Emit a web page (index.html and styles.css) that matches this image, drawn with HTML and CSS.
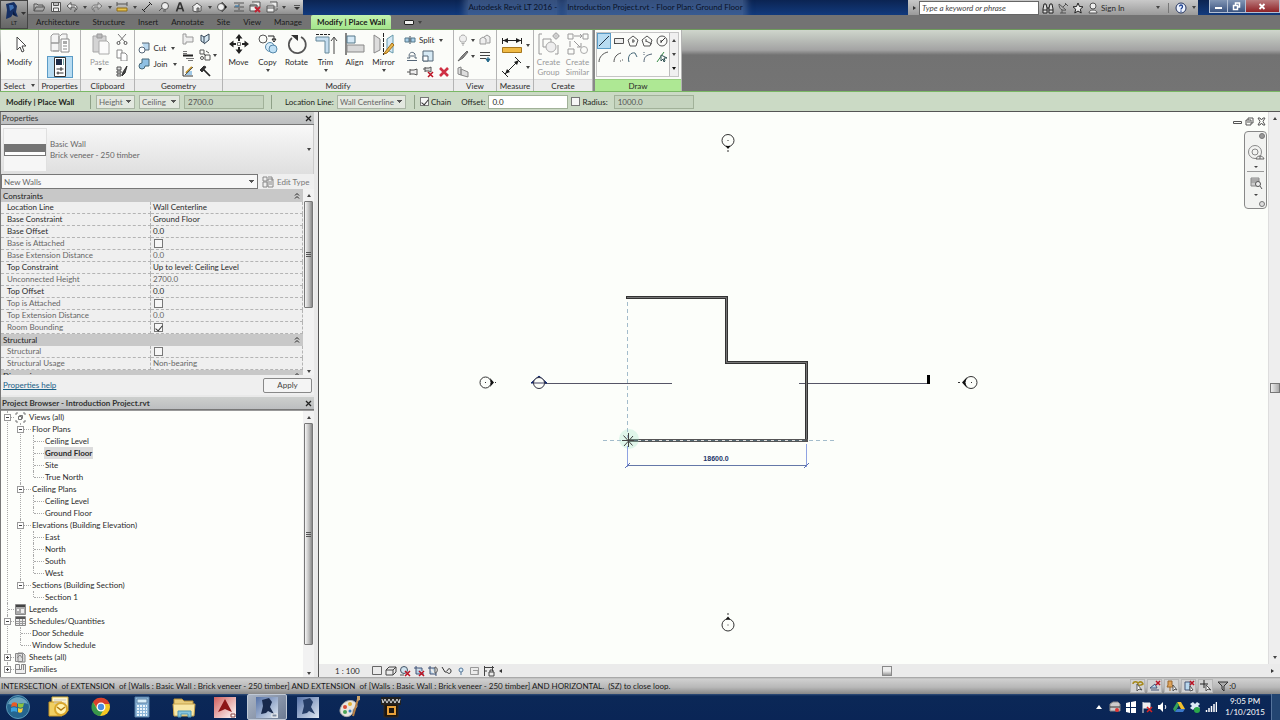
FILE: index.html
```html
<!DOCTYPE html>
<html lang="en">
<head>
<meta charset="utf-8">
<title>Autodesk Revit LT 2016 - Introduction Project.rvt</title>
<link rel="stylesheet" href="styles.css">
</head>
<body>
<div class="window">
<header class="top">
  <button class="app-btn" aria-label="Application menu">
    <svg width="27" height="29" viewBox="0 0 27 29"><path d="M5 4l8-2 3 4-1 6 2 5-5-3-2 3-5 2 1-9z" fill="#152f63" stroke="none"/><path d="M8 5l4 0 1 3-4 3z" fill="#3f6fb0" stroke="none"/><path d="M12 11l4 6-4-2z" fill="#0b1c40" stroke="none"/><path d="M20 12h5l-2.500 3z" fill="#333" stroke="none"/><text x="13" y="25" class="lt">LT</text></svg>
  </button>
  <div class="top-rows">
    <div class="titlebar">
      <div class="qat">
        <button aria-label="Open"><svg class="s" viewBox="0 0 12 12"><path d="M1 10V3h3l1 1h5v2M1 10l2-4h9l-2 4z"/></svg></button>
        <button aria-label="Save"><svg class="s" viewBox="0 0 12 12"><path d="M1.500 1.500h9v9h-9zM3.500 1.500v3h5v-3M3.500 10v-3h5v3" fill="#eee"/></svg></button>
        <button aria-label="Undo"><svg class="s" viewBox="0 0 12 12"><path d="M5 1.500L1 5l4 3.500V6h3c2 0 2 3 0 4.500 4-1 4-6.500 0-6.500H5z" fill="#eee"/></svg></button><i class="dd"></i>
        <button aria-label="Redo"><svg class="s" viewBox="0 0 12 12"><path d="M7 1.500L11 5 7 8.500V6H4c-2 0-2 3 0 4.500C0 9.500 0 4 4 4h3z" fill="#ccc" stroke="#777"/></svg></button><i class="dd"></i>
        <button class="push" aria-label="Measure"><svg class="s" viewBox="0 0 12 12"><path d="M1 3h10M1 1v4M11 1v4"/><path d="M1 7h10v3H1z" fill="#e5c14d" stroke="#8f6c19"/></svg></button><i class="dd"></i>
        <button aria-label="Aligned dimension"><svg class="s" viewBox="0 0 12 12"><path d="M2 10l8-8M1 8l3 3M8 1l3 3" stroke="#222"/></svg></button>
        <button aria-label="Tag"><svg class="s" viewBox="0 0 12 12"><circle cx="7" cy="5" r="3.500" fill="#eee"/><path d="M1 10l3-3M5 10h3"/></svg></button>
        <button aria-label="Text"><svg class="s" viewBox="0 0 12 12"><path d="M2.500 10.500L5.500 2h1l3 8.500M4 7.500h4" stroke="#333" stroke-width="1.700"/></svg></button>
        <button class="push" aria-label="3D view"><svg class="s" viewBox="0 0 12 12"><path d="M1 6l5-4 5 4M2 6v4l4 1 4-1V6M6 11V7h2v3" fill="#eee"/></svg></button><i class="dd"></i>
        <button aria-label="Section"><svg class="s" viewBox="0 0 12 12"><path d="M6 1l5 5-5 5z" fill="#111"/><circle cx="5" cy="6" r="3.500" fill="#eee"/></svg></button>
        <button aria-label="Thin lines"><svg class="s" viewBox="0 0 12 12"><path d="M1 2h4M7 2h4M1 6h4M7 6h4M1 10h4M7 10h4M6 1v10"/><path d="M2 5h4" stroke="#2878b4"/></svg></button>
        <button class="push" aria-label="Close hidden windows"><svg class="s" viewBox="0 0 12 12"><path d="M3 1h8v5M1 4h7v6H1zM1 5h7" fill="#eee"/><path d="M6 6l5 5M11 6l-5 5" stroke="#c02233" stroke-width="2"/></svg></button>
        <button aria-label="Switch windows"><svg class="s" viewBox="0 0 12 12"><path d="M4 1h7v5M1 5h7v6H1zM1 7h7M9 9h2V7" fill="#eee"/></svg></button><i class="dd"></i>
        <button aria-label="Customize"><svg class="s" viewBox="0 0 12 12"><path d="M3 4.500h6"/><path d="M3 6h6L6 9z" fill="#333" stroke="none"/></svg></button>
      </div>
      <h1 class="title"><span>Autodesk Revit LT 2016 -</span><span>Introduction Project.rvt - Floor Plan: Ground Floor</span></h1>
      <div class="info">
        <i class="rt"></i>
        <input class="search" type="text" placeholder="Type a keyword or phrase" aria-label="Search">
        <button aria-label="Find"><svg class="s" viewBox="0 0 12 12"><path d="M1 11V7l1-5h2l1 4v5zM7 11V6l1-4h2l1 5v4zM5 6h2M1 8h4M7 8h4" fill="#ddd" stroke="#222"/></svg></button>
        <button aria-label="Communication"><svg class="s" viewBox="0 0 12 12"><path d="M2 2c0 5 3 7 7 6L2 2M6 5l3-3M3 11h6M5 8v3M8 1l3 3"/></svg></button>
        <button aria-label="Favorites"><svg class="s" viewBox="0 0 12 12"><path d="M6 1l1.500 3.500 3.500.3-2.700 2.400.9 3.800L6 9l-3.200 2 .9-3.800L1 4.800l3.500-.3z" fill="#eee" stroke="#222"/></svg></button>
        <button class="sign"><svg class="s" viewBox="0 0 12 12"><circle cx="6" cy="4" r="3" fill="#eee"/><path d="M2 11c0-4 8-4 8 0z" fill="#eee"/></svg>Sign In</button>
        <i class="dd end"></i><span class="vs"></span>
        <button aria-label="Help"><svg class="s" viewBox="0 0 12 12"><circle cx="6" cy="6" r="5" fill="#eef4ff" stroke="#25355f"/><path d="M4.500 4.500c0-2 3-2 3 0S6 6 6 7.500M6 8.500v1.200" stroke="#1c3f91" stroke-width="1.300"/></svg></button><i class="dd"></i>
      </div>
      <div class="winbtns">
        <button aria-label="Minimize"><svg width="10" height="8" viewBox="0 0 10 8"><path d="M2 6h7" stroke="#fff" stroke-width="2"/></svg></button><button aria-label="Restore"><svg width="10" height="10" viewBox="0 0 10 10"><path d="M2.500 4.500h4v4h-4zM4.500 4V2h4v4h-2" stroke="#fff" stroke-width="1.500"/></svg></button><button class="x" aria-label="Close"><svg width="10" height="10" viewBox="0 0 10 10"><path d="M2.500 3l5 5M7.500 3l-5 5" stroke="#fff" stroke-width="1.800"/></svg></button>
      </div>
    </div>
    <nav class="tabs">
      <button>Architecture</button><button>Structure</button><button>Insert</button><button>Annotate</button><button>Site</button><button>View</button><button>Manage</button><button class="on">Modify | Place Wall</button>
      <span class="tabtoggle"><i class="box"></i><i class="dd"></i></span>
    </nav>
  </div>
</header>

<section class="ribbon">
  <div class="panel p-select"><div class="pb">
    <button class="big"><svg class="l" viewBox="0 0 24 24"><path d="M9 5v13l3-3 2 5 2-1-2-5h4z" fill="#fff" stroke="#444"/></svg>Modify</button>
  </div><div class="pt">Select <i class="dd"></i></div></div>

  <div class="panel p-props"><div class="pb col">
    <button class="mid" aria-label="Type properties"><svg width="24" height="20" viewBox="0 0 24 20"><path d="M3 3l2-2h6v9H3zM12 3l2-2h5v5M3 10h8v8H3zM11 3v7M5 18l6 0" fill="#f4f4f4" stroke="#999"/><path d="M13 6h8v13h-8z" fill="#fff" stroke="#888"/><path d="M15 8h4v3h-4z" fill="#aaa" stroke="none"/><path d="M15 13h4M15 16h4" stroke="#888"/></svg></button>
    <button class="mid sel" aria-label="Properties"><svg width="24" height="20" viewBox="0 0 24 20"><path d="M6.500.5h11v19h-11z" fill="#fff" stroke="#333"/><path d="M8 2h6v6H8z" fill="#1d2c48" stroke="none"/><path d="M15.500 2v6" stroke="#7aa"/><path d="M8.500 12h7M8.500 16h7M13 10v4M10 14.500v3" stroke="#333"/></svg></button>
  </div><div class="pt">Properties</div></div>

  <div class="panel p-clip"><div class="pb">
    <button class="big off"><svg class="l" viewBox="0 0 24 24"><path d="M5 4h13v16H5z" fill="#d4d4d4" stroke="#a5a5a5"/><path d="M9 2h5v4H9z" fill="#bbb" stroke="#999"/><path d="M11 9h8l2 2v11H11z" fill="#fbfbfb" stroke="#aaa"/></svg>Paste<i class="dd"></i></button>
    <div class="stack">
      <button aria-label="Cut to clipboard"><svg class="s" viewBox="0 0 12 12"><path d="M2 1l7 8M10 1L3 9" stroke="#777"/><circle cx="2.500" cy="10" r="1.500"/><circle cx="9.500" cy="10" r="1.500"/></svg></button>
      <button aria-label="Copy to clipboard"><svg class="s" viewBox="0 0 12 12"><path d="M1 1h5v8H1z" fill="#fff" stroke="#888"/><path d="M5 4h4l2 2v6H5z" fill="#fff" stroke="#888"/></svg></button>
      <button aria-label="Match type"><svg class="s" viewBox="0 0 12 12"><path d="M1 2h4v3H1zM1 6h4v2H1zM1 9h4v2H1z" fill="#ddd"/><path d="M11 1L7 7l-1 4 3-3 2-7" fill="#444" stroke="#333"/></svg></button>
    </div>
  </div><div class="pt">Clipboard</div></div>

  <div class="panel p-geom"><div class="pb">
    <div class="stack two">
      <button><svg class="s" viewBox="0 0 12 12"><path d="M4 1h7v7H7" fill="#b9d8ef" stroke="#567"/><circle cx="4" cy="8" r="3" fill="#fff" stroke="#567"/></svg>Cut<i class="dd"></i></button>
      <button><svg class="s" viewBox="0 0 12 12"><path d="M4 1h7v7H7a3 3 0 1 1-3-3z" fill="#8fc0e4" stroke="#467"/></svg>Join<i class="dd"></i></button>
    </div>
    <div class="mini-grid">
      <button aria-label="Cope"><svg class="s" viewBox="0 0 12 12"><path d="M1 1h3v3h7v5H4v2H1z" fill="#eee" stroke="#999"/></svg></button>
      <button aria-label="Split face"><svg class="s" viewBox="0 0 12 12"><path d="M2 2l3 2v6L2 8zM5 4l5-3v6l-5 4" fill="#d4e6f2" stroke="#345"/></svg></button>
      <button aria-label="Wall joins"><svg class="s" viewBox="0 0 12 12"><path d="M1 2.500h4M4 9.500h8M1 4.500h4M6 11.500h5" stroke="#777"/><path d="M1 6.500h10" stroke="#222" stroke-width="2"/></svg></button>
      <button class="wide" aria-label="Beam joins"><svg class="s" viewBox="0 0 12 12"><path d="M1 1h4v4H1zM6 6h5v5H6z" stroke="#555"/><circle cx="3" cy="9" r="1.500"/><path d="M7 2l3 2M5 5l2 2"/></svg><i class="dd"></i></button>
      <button aria-label="Paint"><svg class="s" viewBox="0 0 12 12"><path d="M1 1v10h10" stroke="#333"/><path d="M4 6h6v4H4z" fill="#9fc8e6" stroke="none"/><path d="M4 8l6-6" stroke="#c5952c" stroke-width="2"/><path d="M3 10l8-8" stroke="#555"/></svg></button>
      <button aria-label="Demolish"><svg class="s" viewBox="0 0 12 12"><path d="M4 4l7 7" stroke="#222" stroke-width="1.700"/><path d="M1 5l4-4 2 1-4 5z" fill="#333" stroke="#333"/></svg></button>
    </div>
  </div><div class="pt">Geometry</div></div>

  <div class="panel p-mod"><div class="pb">
    <button class="big"><svg class="l" viewBox="0 0 24 24"><path d="M12 2l3.500 4.500h-7zM12 22l3.500-4.500h-7zM2 12l4.500-3.500v7zM22 12l-4.500-3.500v7z" fill="#222" stroke="none"/><path d="M12 5v4M12 15v4M5 12h4M15 12h4" stroke="#222" stroke-width="2"/><path d="M10.500 10.500h3v3h-3z" stroke="#777"/></svg>Move</button>
    <button class="big"><svg class="l" viewBox="0 0 24 24"><circle cx="7" cy="7" r="4" stroke="#555"/><circle cx="14" cy="15" r="4.500" fill="#d6ecfa" stroke="#58a"/><circle cx="17" cy="17" r="4" fill="#bfe0f5" stroke="#58a"/><path d="M12 4h6v4M16 7l2 3 2-3z" stroke="#222"/></svg>Copy<i class="dd"></i></button>
    <button class="big"><svg class="l" viewBox="0 0 24 24"><path d="M7 6a8.500 8.500 0 1 0 9-1" stroke="#555" stroke-width="1.700"/><path d="M6 3h7v6z" fill="#333" stroke="none"/></svg>Rotate</button>
    <button class="big"><svg class="l" viewBox="0 0 24 24"><path d="M2 5h13v16h-4V9H2z" stroke="#689" fill="#c5def0"/><path d="M2 2.500h14" stroke="#222" stroke-dasharray="3 1"/><path d="M20 6v16M17 9l3-4 3 4" stroke="#444"/></svg>Trim<i class="dd"></i></button>
    <button class="big"><svg class="l" viewBox="0 0 24 24"><path d="M3 1v22" stroke="#111"/><path d="M4 4h8v7H4z" fill="#d5e9f6" stroke="#578"/><path d="M4 13h17v7H4z" fill="#d8d8d8" stroke="#888"/></svg>Align</button>
    <button class="big"><svg class="l" viewBox="0 0 24 24"><path d="M2 3l6 4v11l-6 3z" fill="#ddd" stroke="#888"/><path d="M21 3l-6 4v11l6 3z" fill="#d5e9f6" stroke="#69a"/><path d="M11.500 1v22" stroke="#222" stroke-dasharray="4 1"/><path d="M13 20l7-9 2 2-7 8-3 1z" fill="#e8b84d" stroke="#a56d16"/></svg>Mirror<i class="dd"></i></button>
    <div class="edit-grid">
      <button class="split"><svg class="s" viewBox="0 0 12 12"><path d="M1 4h4v4H1zM7 4h4v4H7z" fill="#a9cfe8" stroke="#578"/><path d="M6 2v8" stroke="#345"/></svg>Split<i class="dd"></i></button>
      <button aria-label="Offset"><svg class="s" viewBox="0 0 12 12"><path d="M1 10.500h10M1 8h3c-3-4 2-8 5-4v4h2M4 6h4" stroke="#567"/></svg></button>
      <button aria-label="Scale"><svg class="s" viewBox="0 0 12 12"><path d="M1 1h10v10H1z" fill="#d7eaf5" stroke="#567"/><path d="M1 6h5v5H1z" fill="#fff" stroke="#567"/></svg></button><span></span>
      <button aria-label="Pin"><svg class="s" viewBox="0 0 12 12"><path d="M1 6h3M4 3v6M4 4h4l3-1v6L8 8H4" fill="#eee"/></svg></button>
      <button aria-label="Unpin"><svg class="s" viewBox="0 0 12 12"><path d="M1 3h2M3 1v5M3 2h4l2-1v5L7 5H3" fill="#ddd"/><path d="M6 6l5 5M11 6l-5 5" stroke="#b12" stroke-width="1.500"/></svg></button>
      <button aria-label="Delete"><svg class="s" viewBox="0 0 12 12"><path d="M2 2l8 8M10 2l-8 8" stroke="#cf3044" stroke-width="2.600"/></svg></button>
    </div>
  </div><div class="pt">Modify</div></div>

  <div class="panel p-view"><div class="pb">
    <div class="pair-grid">
      <button aria-label="Hide"><svg class="s" viewBox="0 0 12 12"><path d="M4 8C1 5 3 1 6 1s5 4 2 7zM4.500 9.500h3M5 11h2" fill="#eee" stroke="#aaa"/></svg><i class="dd"></i></button>
      <button aria-label="Displace"><svg class="s" viewBox="0 0 12 12"><path d="M1 5l3-2 3 2v5H1zM5 3l3-2 3 2v6H8" fill="#eee" stroke="#999"/></svg></button>
      <button aria-label="Override"><svg class="s" viewBox="0 0 12 12"><path d="M10 1L5 6l-4 5 5-3 5-6z" fill="#888" stroke="#666"/></svg><i class="dd"></i></button>
      <button aria-label="Linework"><svg class="s" viewBox="0 0 12 12"><path d="M1 2.500h10M1 5.500h10M1 8.500h6" stroke="#444"/><path d="M9 7v3M7 9l2 3 2-3z" fill="#268" stroke="#268"/></svg></button>
      <button aria-label="Selection box"><svg class="s" viewBox="0 0 12 12"><path d="M1 2l3-1v8l-3-1zM4 3l7 3v5L4 9z" fill="#ddd" stroke="#888"/></svg></button>
    </div>
  </div><div class="pt">View</div></div>

  <div class="panel p-meas"><div class="pb col">
    <button class="mid m" aria-label="Measure"><svg width="22" height="20" viewBox="0 0 22 20"><path d="M2 5.500h18M1.500 3v6M20.500 3v6" stroke="#222"/><path d="M2 5.500l5-2.500v5zM20 5.500l-5-2.500v5z" fill="#222" stroke="none"/><path d="M1.500 12.500h19v5h-19z" fill="#efb944" stroke="#a7771d"/></svg><i class="dd"></i></button>
    <button class="mid m" aria-label="Dimension"><svg width="22" height="22" viewBox="0 0 22 22"><path d="M4 18L18 4M1 15l6 6M14 1l6 6" stroke="#222"/><path d="M4 18l2-5 3 3zM18 4l-2 5-3-3z" fill="#222" stroke="none"/></svg><i class="dd"></i></button>
  </div><div class="pt">Measure</div></div>

  <div class="panel p-create"><div class="pb">
    <button class="big off"><svg class="l" viewBox="0 0 24 24"><path d="M5 2H2v20h3M18 22h3v-9M6 7h8v8H6z" stroke="#999" fill="none"/><circle cx="14" cy="15" r="5" fill="#eee" stroke="#aaa"/><circle cx="19" cy="4" r="2.500" stroke="#999"/><path d="M19 0v8M15 4h8" stroke="#bbb"/></svg><span>Create<br>Group</span></button>
    <button class="big off"><svg class="l" viewBox="0 0 24 24"><path d="M2 2h5v5H2zM17 2h5v5h-5zM2 17h6v5H2z" stroke="#999"/><path d="M8 4h8M14 2l2 2-2 2M8 9l6 6M11 15h4v-4M4 9v6" stroke="#999"/><circle cx="18" cy="18" r="3.500" stroke="#aaa"/></svg><span>Create<br>Similar</span></button>
  </div><div class="pt">Create</div></div>

  <div class="panel p-draw"><div class="pb">
    <div class="gallery">
      <div class="shapes">
        <button class="sel" aria-label="Line"><svg class="s" viewBox="0 0 12 12"><path d="M1 11L11 1" stroke="#234"/></svg></button>
        <button aria-label="Rectangle"><svg class="s" viewBox="0 0 12 12"><path d="M1.500 3.500h9v5h-9z" stroke="#555" fill="#eee"/><path d="M1 8h2v1H1zM9 3h2v1H9z" fill="#444" stroke="none"/></svg></button>
        <button aria-label="Inscribed polygon"><svg class="s" viewBox="0 0 12 12"><path d="M6 1l5 4-2 6H3L1 5zM6 4v4M5 6h3" stroke="#555"/></svg></button>
        <button aria-label="Circumscribed polygon"><svg class="s" viewBox="0 0 12 12"><path d="M6 1l5 4-2 6H3L1 5zM5 6l6 3M5 4v3" stroke="#555"/></svg></button>
        <button aria-label="Circle"><svg class="s" viewBox="0 0 12 12"><circle cx="6" cy="6" r="5" stroke="#555"/><path d="M5 7l4-4M5 5v3" stroke="#333"/></svg></button>
        <button aria-label="Start end arc"><svg class="s" viewBox="0 0 12 12"><path d="M1 11C1 6 5 2 10 1" stroke="#555"/></svg></button>
        <button aria-label="Center ends arc"><svg class="s" viewBox="0 0 12 12"><path d="M1 11C1 6 4 3 8 2M9 9h1M7 10h1" stroke="#555"/></svg></button>
        <button aria-label="Tangent arc"><svg class="s" viewBox="0 0 12 12"><path d="M2 11C0 5 4 1 8 2l2 4" stroke="#467"/></svg></button>
        <button aria-label="Fillet arc"><svg class="s" viewBox="0 0 12 12"><path d="M3 11c0-5 2-7 8-8M3 3v1M3 1v1" stroke="#567"/></svg></button>
        <button aria-label="Pick lines"><svg class="s" viewBox="0 0 12 12"><path d="M1 11L8 1" stroke="#384"/><path d="M5 4v6l2-2 1 3 1-1-1-3h3z" fill="#fff" stroke="#355"/></svg></button>
      </div>
      <div class="gscroll"><i class="up"></i><i class="dd"></i><i class="dd more"></i></div>
    </div>
  </div><div class="pt">Draw</div></div>
</section>

<form class="options">
  <strong>Modify | Place Wall</strong><span class="sep"></span>
  <select class="o-h" aria-label="Height"><option>Height</option></select>
  <select class="o-c" aria-label="Level"><option>Ceiling</option></select>
  <input class="o-v" type="text" value="2700.0" aria-label="Height value"><span class="sep"></span>
  <label class="o-l" for="locline">Location Line:</label><select class="o-loc" id="locline"><option>Wall Centerline</option></select><span class="sep"></span>
  <label class="ck"><input type="checkbox" checked>Chain</label>
  <label class="o-off" for="offset">Offset:</label><input class="o-w" id="offset" type="text" value="0.0">
  <label class="ck" for="radck"><input id="radck" type="checkbox">Radius:</label><input class="o-r" type="text" value="1000.0" aria-label="Radius value">
</form>

<main class="work">
  <aside class="side">
    <section class="props">
      <h2 class="ph">Properties<button aria-label="Close properties"><svg width="7" height="7" viewBox="0 0 7 7"><path d="M1 1l5 5M6 1L1 6" stroke="#222" stroke-width="1.300"/></svg></button></h2>
      <button class="type"><span class="thumb"><i></i></span><span>Basic Wall<br>Brick veneer - 250 timber</span><i class="dd"></i></button>
      <div class="filter"><select aria-label="Filter"><option>New Walls</option></select><button><svg width="12" height="12" viewBox="0 0 12 12"><path d="M1 1h4v4H1zM6 1h4v4M1 6h4v5H1zM6 3h5v8H6zM7 6h3M7 8h3" stroke="#888"/></svg>Edit Type</button></div>
      <div class="pg">
        <div class="pgrid"><table>
          <colgroup><col class="c1"><col></colgroup>
          <tr class="g"><th colspan="2">Constraints<svg class="chev" viewBox="0 0 6 8"><path d="M1 3.500l2-2 2 2M1 6.500l2-2 2 2"/></svg></th></tr>
          <tr><td>Location Line</td><td>Wall Centerline</td></tr>
          <tr><td>Base Constraint</td><td>Ground Floor</td></tr>
          <tr><td>Base Offset</td><td>0.0</td></tr>
          <tr class="ro"><td>Base is Attached</td><td><input type="checkbox" aria-label="Base is Attached"></td></tr>
          <tr class="ro"><td>Base Extension Distance</td><td>0.0</td></tr>
          <tr><td>Top Constraint</td><td>Up to level: Ceiling Level</td></tr>
          <tr class="ro"><td>Unconnected Height</td><td>2700.0</td></tr>
          <tr><td>Top Offset</td><td>0.0</td></tr>
          <tr class="ro"><td>Top is Attached</td><td><input type="checkbox" aria-label="Top is Attached"></td></tr>
          <tr class="ro"><td>Top Extension Distance</td><td>0.0</td></tr>
          <tr class="ro"><td>Room Bounding</td><td><input type="checkbox" checked aria-label="Room Bounding"></td></tr>
          <tr class="g"><th colspan="2">Structural<svg class="chev" viewBox="0 0 6 8"><path d="M1 3.500l2-2 2 2M1 6.500l2-2 2 2"/></svg></th></tr>
          <tr class="ro"><td>Structural</td><td><input type="checkbox" aria-label="Structural"></td></tr>
          <tr class="ro"><td>Structural Usage</td><td>Non-bearing</td></tr>
          <tr class="g"><th colspan="2">Dimensions<svg class="chev" viewBox="0 0 6 8"><path d="M1 3.500l2-2 2 2M1 6.500l2-2 2 2"/></svg></th></tr>
        </table></div>
        <div class="vs-bar"><i class="up"></i><span class="thumbv t1"></span><i class="dd"></i></div>
      </div>
      <div class="pfoot"><a href="#help">Properties help</a><button>Apply</button></div>
    </section>
    <section class="browser">
      <h2 class="ph">Project Browser - Introduction Project.rvt<button aria-label="Close browser"><svg width="7" height="7" viewBox="0 0 7 7"><path d="M1 1l5 5M6 1L1 6" stroke="#222" stroke-width="1.300"/></svg></button></h2>
      <div class="tree-wrap">
        <ul class="tree">
          <li><div class="n"><i class="ex"></i><svg class="ti" viewBox="0 0 11 11"><path d="M1 3V1h2M8 1h2v2M10 8v2H8M3 10H1V8M3.500 4.500h3v3h-3zM3.500 4.500l1-1h3v3l-1 1" stroke="#777"/></svg>Views (all)</div>
            <ul>
              <li><div class="n"><i class="ex"></i>Floor Plans</div><ul><li><div class="n">Ceiling Level</div></li><li><div class="n cur"><b>Ground Floor</b></div></li><li><div class="n">Site</div></li><li><div class="n">True North</div></li></ul></li>
              <li><div class="n"><i class="ex"></i>Ceiling Plans</div><ul><li><div class="n">Ceiling Level</div></li><li><div class="n">Ground Floor</div></li></ul></li>
              <li><div class="n"><i class="ex"></i>Elevations (Building Elevation)</div><ul><li><div class="n">East</div></li><li><div class="n">North</div></li><li><div class="n">South</div></li><li><div class="n">West</div></li></ul></li>
              <li><div class="n"><i class="ex"></i>Sections (Building Section)</div><ul><li><div class="n">Section 1</div></li></ul></li>
            </ul></li>
          <li><div class="n"><svg class="ti" viewBox="0 0 11 11"><path d="M.5.500h10v10H.5z" fill="#aaa" stroke="#888"/><path d="M1 1h9v2H1z" fill="#444" stroke="none"/><path d="M2 5h2v2H2zM6 5h3v4H6z" fill="#eee" stroke="none"/></svg>Legends</div></li>
          <li><div class="n"><i class="ex"></i><svg class="ti" viewBox="0 0 11 11"><path d="M.5.500h10v9H.5z" fill="#eee" stroke="#888"/><path d="M1 1h9v2H1z" fill="#555" stroke="none"/><path d="M1 5.500h9M1 7.500h9M4.500 3v6M7.500 3v6" stroke="#999"/></svg>Schedules/Quantities</div>
            <ul><li><div class="n">Door Schedule</div></li><li><div class="n">Window Schedule</div></li></ul></li>
          <li><div class="n"><i class="ex plus"></i><svg class="ti" viewBox="0 0 11 11"><path d="M.5 1.500h7v8h-7zM3 1h5l2 2v7H3zM2 6l3-3 3 4" fill="#ddd" stroke="#888"/></svg>Sheets (all)</div></li>
          <li><div class="n"><i class="ex plus"></i><svg class="ti" viewBox="0 0 11 11"><path d="M.5.500h4v5h-4zM6.500.500h4v9h-10v-4h6zM8.500 1v5" fill="#eee" stroke="#888"/></svg>Families</div></li>
        </ul>
        <div class="vs-bar"><i class="up"></i><span class="thumbv t2"></span><i class="dd"></i></div>
      </div>
    </section>
  </aside>

  <section class="view">
    <div class="canvas-row">
      <div class="canvas">
        <svg class="plan" viewBox="319 112 949 552" preserveAspectRatio="xMidYMid meet">
          <g stroke="#333" fill="none" stroke-width="1">
            <circle cx="728" cy="140.500" r="6"/><path d="M725.500 146h5l-2.500 3z" fill="#111" stroke="none"/><path d="M727.500 140.500h1M728 150v2"/>
            <circle cx="728" cy="625" r="6"/><path d="M725.500 619.500h5l-2.500-3z" fill="#111" stroke="none"/><path d="M727.500 625h1M728 615v-2"/>
            <circle cx="485.500" cy="382.500" r="5.500"/><path d="M490 378l4 4.500-4 4.500 1-4.500z" fill="#111" stroke="none"/><path d="M485 382.500h1M495 382.500h1"/>
            <circle cx="971" cy="382.500" r="6"/><path d="M967 377l-5 5.500 5 5.500-2-5.500z" fill="#111" stroke="none"/><path d="M971 382.500h1M958 382.500h2"/>
            <path d="M545 383.500h127M799 383.500h129" stroke="#556"/><path d="M928.500 375v9" stroke="#000" stroke-width="3"/>
            <path d="M531 383l8-7 8 7z" fill="#13296e" stroke="#13296e"/><circle cx="539" cy="383" r="5.500" fill="#fbfdf8" stroke="#334"/><path d="M534 383h10" stroke="#446"/>
          </g>
          <path d="M626 297.500H726.500V362.500H806.500V442" fill="none" stroke="#333" stroke-width="3"/>
          <path d="M627 297.500H726.500V362.500H806.500V441" fill="none" stroke="#777" stroke-width="1"/>
          <path d="M628 440.500H808" stroke="#555" stroke-width="3"/><path d="M634 440.500H805" stroke="#ddd"/>
          <circle cx="629" cy="439" r="10" fill="#9fe3c6" stroke="none" opacity=".3"/>
          <path d="M627.500 302v136M603 440.500h20M809 440.500h25" stroke="#a3bccb" stroke-dasharray="4 3" fill="none"/>
          <path d="M634 440.500H805" stroke="#576b74" stroke-dasharray="4 3"/>
          <path d="M622 440.500h12M628.500 433v14M623.500 435.500l9 10M633 436l-9 10" stroke="#444"/>
          <path d="M627.500 446v21M806.500 444v23" stroke="#8fa3e2"/><path d="M627 465.500h180" stroke="#6478a8"/><path d="M625 468l5-5M804 468l5-5" stroke="#5a6fb6"/>
          <text x="716" y="461" class="dim">18600.0</text>
        </svg>
        <div class="mdi"><button aria-label="Minimize view"><svg width="9" height="9" viewBox="0 0 9 9"><path d="M.5 4.500h8v2h-8z"/></svg></button><button aria-label="Restore view"><svg width="9" height="9" viewBox="0 0 9 9"><path d="M1 3h5v5H1zM3 3V1h5v5H6M2 5h3"/></svg></button><button aria-label="Close view"><svg width="9" height="9" viewBox="0 0 9 9"><path d="M1 1h2l1.500 2L6 1h2L6 4.500 8 8H6L4.500 6 3 8H1l2-3.500z"/></svg></button></div>
        <div class="navbar">
          <svg width="8" height="8" viewBox="0 0 8 8"><circle cx="4" cy="4" r="2.500" fill="#999" stroke="#777"/></svg>
          <button aria-label="Steering wheel"><svg width="18" height="18" viewBox="0 0 18 18"><circle cx="8" cy="8" r="6.500" stroke="#888"/><circle cx="8" cy="8" r="3" stroke="#888"/><path d="M9 15c1-4 7-4 8 0zM13 12v3" fill="#eee" stroke="#666"/></svg></button><i class="dd"></i>
          <span class="hr"></span>
          <button aria-label="Zoom"><svg width="14" height="14" viewBox="0 0 14 14"><path d="M2 2h8v8H2zM2 4h8M2 6h8" fill="#ccc" stroke="#888"/><circle cx="9" cy="8" r="2.500" fill="#eee" stroke="#555"/><path d="M11 10l2 3"/></svg></button><i class="dd"></i>
          <svg width="8" height="8" viewBox="0 0 8 8"><circle cx="4" cy="4" r="2.500" fill="#ddd" stroke="#777"/></svg>
        </div>
      </div>
      <div class="cv-scroll"><i class="up"></i><span></span><i class="dd"></i></div>
    </div>
    <div class="viewbar">
      <span class="scale">1 : 100</span>
      <div class="vicons">
      <button aria-label="Detail level"><svg class="s" viewBox="0 0 12 12"><path d="M1.500 1.500h9v8h-9z" stroke="#666"/></svg></button>
      <button aria-label="Visual style"><svg class="s" viewBox="0 0 12 12"><path d="M1 5h7v5H1zM1 5l3-3h7L8 5M11 2v5l-3 3" stroke="#444"/></svg></button>
      <button aria-label="Shadows"><svg class="s" viewBox="0 0 12 12"><circle cx="5" cy="5" r="3.500" fill="#cfe2ee" stroke="#456"/><path d="M1 10h4"/><path d="M6 6l5 5M11 6l-5 5" stroke="#b12" stroke-width="1.500"/></svg></button>
      <button aria-label="Crop view"><svg class="s" viewBox="0 0 12 12"><path d="M3 1v8h8M1 3h8v3" fill="#b7d3e8" stroke="#457"/><path d="M6 6l5 5M11 6l-5 5" stroke="#b12" stroke-width="1.500"/></svg></button>
      <button aria-label="Show crop"><svg class="s" viewBox="0 0 12 12"><path d="M3 1v8h6M1 3h8v8" fill="#b7d3e8" stroke="#457"/><path d="M8 2c3 0 3 6 0 6z" fill="#eee"/></svg></button>
      <button aria-label="Hide isolate"><svg class="s" viewBox="0 0 12 12"><path d="M1 2l3 5h2c1 2 4 2 4-1S7 3 6 6" stroke="#333"/></svg></button>
      <button aria-label="Reveal hidden"><svg class="s" viewBox="0 0 12 12"><circle cx="6" cy="5" r="2" fill="#d8edfa" stroke="#579"/><path d="M6 7v3" stroke="#579"/></svg></button>
      <button aria-label="View properties"><svg class="s" viewBox="0 0 12 12"><path d="M1.500 2.500h8v7h-8z" stroke="#999"/><path d="M4 5.500h5v4" stroke="#999"/></svg></button>
      <button aria-label="Constraints"><svg class="s" viewBox="0 0 12 12"><path d="M1.500 1v10M1 2.500h10M9.500 1v5M1 6h3M6 7h5v4H6zM7 7V5h3v2" stroke="#444"/></svg></button>
      </div>
      <i class="lt-arrow"></i><div class="hs"><span></span></div><i class="rt"></i>
    </div>
  </section>
</main>

<footer class="status"><span class="msg">INTERSECTION  of EXTENSION  of [Walls : Basic Wall : Brick veneer - 250 timber] AND EXTENSION  of [Walls : Basic Wall : Brick veneer - 250 timber] AND HORIZONTAL.  (SZ) to close loop.</span>
  <div class="sicons">
    <button aria-label="Select links"><svg class="s" viewBox="0 0 12 12"><path d="M1 4c0-3 5-3 5 0s5 0 5 0-1-4-5-1" stroke="#a68a1e" stroke-width="1.500"/><path d="M5 4v7l2-2 3 1z" fill="#fff"/></svg></button>
    <button aria-label="Select underlay"><svg class="s" viewBox="0 0 12 12"><path d="M1 8h7L6 4zM2 10h8" fill="#b9d9ee" stroke="#457"/><path d="M7 1l4 4M11 1L7 5" stroke="#b12" stroke-width="1.500"/></svg></button>
    <button aria-label="Select pinned"><svg class="s" viewBox="0 0 12 12"><path d="M2 1h4v4l2 2H1l1-2zM4 7v4" fill="#dfa45a" stroke="#9a672d"/><path d="M7 5v6l2-2 2 1z" fill="#fff"/></svg></button>
    <button aria-label="Select by face"><svg class="s" viewBox="0 0 12 12"><path d="M2 2h5v8H2z" fill="#b9d9ee" stroke="#457"/><path d="M7 1l4 4M11 1L7 5" stroke="#b12" stroke-width="1.500"/><path d="M7 6v5l3-1z" fill="#fff"/></svg></button>
    <button aria-label="Drag elements"><svg class="s" viewBox="0 0 12 12"><path d="M4 0v8M0 4h8" stroke="#222"/><path d="M6 5v6l2-2 3 1z" fill="#fff"/></svg></button>
    <button class="flat"><svg class="s" viewBox="0 0 12 12"><path d="M1 2h10L7 6v5L5 9V6z" fill="#aaa" stroke="#333"/></svg>:0</button>
  </div>
</footer>

<footer class="taskbar">
  <button class="start" aria-label="Start"><svg width="26" height="26" viewBox="0 0 26 26"><circle cx="13" cy="13" r="11.500" fill="#25658f" stroke="#5b98b8"/><path d="M3 10c3-9 17-9 20 0-7-3-13 2-20 0z" fill="#8cc1d3" stroke="none" opacity=".7"/><path d="M7 9c2-1 3-1 5 0v4c-2-1-4-1-6 0z" fill="#e85b27" stroke="none"/><path d="M13 9c2 1 4 1 6 0l-1 4c-2 1-3 1-5 0z" fill="#8dc43d" stroke="none"/><path d="M6 14c2-1 4-1 6 0v4c-2-1-4-1-6 0z" fill="#3aa1df" stroke="none"/><path d="M13 14c2 1 3 1 5 0l-1 4c-1 1-3 1-4 0z" fill="#f8cd36" stroke="none"/></svg></button>
  <div class="apps">
    <button aria-label="Outlook"><svg class="t" viewBox="0 0 24 24"><path d="M5 2h16v14H5z" fill="#fff6cc" stroke="#d8b23c"/><path d="M2 7h13v14H2z" fill="#f0cf62" stroke="#c69525"/><path d="M7 5h12M7 8h12" stroke="#c9c9c9"/><circle cx="14" cy="14" r="6" fill="#fff3b0" stroke="#d9a72c" stroke-width="2"/><path d="M10 12l4 3 4-3" stroke="#b27c12" stroke-width="1.500"/></svg></button>
    <button aria-label="Chrome"><svg class="t" viewBox="0 0 24 24"><circle cx="12" cy="12" r="9" fill="#f3c623" stroke="none"/><path d="M4 7a9.200 9.200 0 0 1 16.500 2H12a4 4 0 0 0-4 4z" fill="#d9402c" stroke="none"/><path d="M4 7a9 9 0 0 0 7 14l4-7c-3 4-7 1-7 0z" fill="#38984a" stroke="none"/><circle cx="12" cy="12" r="3.800" fill="#4b8de0" stroke="#fff" stroke-width="1.300"/></svg></button>
    <button aria-label="Calculator"><svg class="t" viewBox="0 0 24 24"><path d="M5 2h14v20H5z" fill="#8db6d8" stroke="#567fa5"/><path d="M7 4h10v4H7z" fill="#d9eef8" stroke="#5c82a5"/><path d="M7 11h10M7 14h10M7 17h10M7 20h10" stroke="#eaf4fa" stroke-width="2" stroke-dasharray="2 1"/></svg></button>
    <button aria-label="Explorer"><svg class="t" viewBox="0 0 24 24"><path d="M2 4h8l2 2h9v14H2z" fill="#e8cd7d" stroke="#b68e35"/><path d="M1 9h22l-1 12H2z" fill="#f8e7a6" stroke="#c7a34c"/><path d="M6 22v-6h13v6h-3v-3H9v3z" fill="#86c4de" stroke="#4c94b5"/></svg></button>
    <button aria-label="AutoCAD"><svg class="t" viewBox="0 0 24 24"><defs><linearGradient id="red" x2="1" y2="1"><stop stop-color="#d1605e"/><stop offset="1" stop-color="#fff"/></linearGradient><linearGradient id="blue" x2="1" y2="1"><stop stop-color="#5370a6"/><stop offset="1" stop-color="#dfe8f3"/></linearGradient></defs><path d="M1 2h22v21H1z" fill="url(#red)" stroke="none"/><path d="M12 4l7 13-5-2-2-1-2 1-5 2z" fill="#8d1517" stroke="none"/><path d="M18 19h4v3h-4z" fill="#fff" stroke="#844"/></svg></button>
    <button class="active" aria-label="Revit LT"><svg class="t" viewBox="0 0 24 24"><path d="M1 2h22v21H1z" fill="url(#blue)" stroke="none"/><path d="M7 5l7-2 3 4-2 5 4 7-6-3-2 2-5 1 2-8z" fill="#18294c" stroke="none"/><path d="M17 19h5v3h-5z" fill="#7888a0" stroke="#eee"/></svg></button>
    <button aria-label="Revit"><svg class="t" viewBox="0 0 24 24"><path d="M1 2h22v21H1z" fill="url(#blue)" stroke="none"/><path d="M7 5l7-2 3 4-2 5 4 7-6-3-2 2-5 1 2-8z" fill="#243c66" stroke="none"/></svg></button>
    <button aria-label="Paint"><svg class="t" viewBox="0 0 24 24"><path d="M3 12C6 4 18 3 19 11c0 3-4 1-4 5s-5 7-9 5-5-5-3-9z" fill="#e8e5df" stroke="#aaa"/><circle cx="7" cy="12" r="2" fill="#d84b37" stroke="none"/><circle cx="12" cy="9" r="2" fill="#e2b236" stroke="none"/><circle cx="7" cy="17" r="2" fill="#4aa356" stroke="none"/><circle cx="12" cy="16" r="1.500" fill="#357cc4" stroke="none"/><path d="M20 4l-5 17" stroke="#b78045" stroke-width="2"/><path d="M19 1h3v4l-3 1z" fill="#c7a16b" stroke="none"/></svg></button>
    <button aria-label="Recorder"><svg class="t" viewBox="0 0 24 24"><path d="M2 2h20v8H2z" fill="#222" stroke="none"/><path d="M3 4l1 4 2-4 2 4 2-4 2 4 2-4 2 4 2-4 2 4 1-4" stroke="#ddd"/><path d="M5 9h14v13H5z" fill="#1c1713" stroke="#332820"/><path d="M9 12h7v7H9z" stroke="#e9a13b" stroke-width="2"/></svg></button>
  </div>
  <div class="tray">
    <button aria-label="Show hidden icons"><i class="up w"></i></button>
    <button aria-label="Device"><svg class="s" viewBox="0 0 12 12"><path d="M1 3l3-2h5l2 2v7H1z" fill="#ccc" stroke="#888"/><path d="M1 6h10" stroke="#333"/><circle cx="8" cy="9" r="2" fill="#d33" stroke="none"/></svg></button>
    <button aria-label="Windows"><svg class="s" viewBox="0 0 12 12"><path d="M1 2l4-1v5H1zM6 1l5-1v6H6zM1 7h4v5l-4-1zM6 7h5v5H6z" fill="#fff" stroke="none"/></svg></button>
    <button aria-label="Action Center"><svg class="s" viewBox="0 0 12 12"><path d="M2 1v11M2 2h7v5H2" fill="#eee" stroke="#eee"/><path d="M6 6l5 5M11 6l-5 5" stroke="#d22" stroke-width="1.500"/></svg></button>
    <button aria-label="Volume"><svg class="s" viewBox="0 0 12 12"><path d="M1 4h2l3-3v10L3 8H1z" fill="#fff" stroke="none"/><path d="M8 4c1 1 1 3 0 4" stroke="#fff"/></svg></button>
    <button aria-label="Drive"><svg class="s" viewBox="0 0 12 12"><path d="M4 1h4l4 7H8z" fill="#f2c02d" stroke="none"/><path d="M4 1L0 8l2 3 4-7z" fill="#34a05a" stroke="none"/><path d="M4 8h8l-2 3H2z" fill="#3d79ca" stroke="none"/></svg></button>
    <button aria-label="Dropbox"><svg class="s" viewBox="0 0 12 12"><path d="M1 3l3-2 2 2 2-2 3 2-2 2 2 2-3 2-2-2-2 2-3-2 2-2z" fill="#dceaf5" stroke="none"/><circle cx="8" cy="9" r="3" fill="#2ba84a" stroke="none"/></svg></button>
    <button aria-label="Network"><svg class="s" viewBox="0 0 12 12"><path d="M1.500 9v2M4 7v4M6.500 5v6M9 3v8M11.500 1v10" stroke="#fff" stroke-width="1.500"/></svg></button>
    <time class="clock">9:05 PM<br>1/10/2015</time>
    <button class="peek" aria-label="Show desktop"></button>
  </div>
</footer>
</div>
</body>
</html>
```
FILE: styles.css
```css
* { box-sizing: border-box; }
body { margin: 0; font: 8px/12px Lato, "Open Sans", sans-serif; color: #2b2b2b; background: #0c2c5f; }
button, input, select { font: inherit; color: inherit; margin: 0; padding: 0; border: 0; background: none; border-radius: 0; }
button { display: flex; align-items: center; justify-content: center; }
select { appearance: none; }
h1, h2, ul { margin: 0; padding: 0; font-weight: 400; font-size: 8px; }
svg { display: block; flex: none; fill: none; stroke: #555; }
.s { width: 12px; height: 12px; }
.l { width: 24px; height: 24px; }
.t { width: 24px; height: 24px; }
.window { display: flex; flex-direction: column; min-height: 100vh; }

.dd, .up, .rt, .lt-arrow { flex: none; width: 0; height: 0; border: 2px solid transparent; }
.dd { border-top: 3px solid #444; border-bottom: 0; }
.up { border-bottom: 3px solid #444; border-top: 0; }
.rt { border-left: 3px solid #333; border-right: 0; }
.lt-arrow { border-right: 3px solid #333; border-left: 0; }
.up.w { border-width: 0 3px 4px; border-bottom-color: #fff; }

.top { display: flex; height: 29px; background: #737373; }
.app-btn { width: 28px; background: linear-gradient(#aaa, #777 60%, #666); border: 1px solid #444; }
.lt { font-size: 6px; fill: #222; stroke: none; text-anchor: middle; }
.top-rows { flex: 1; display: flex; flex-direction: column; min-width: 0; }
.titlebar { display: flex; height: 15px; background: linear-gradient(#0b2452, #123a7d); align-items: stretch; overflow: hidden; }
.qat { display: flex; align-items: center; justify-content: space-between; width: 275px; padding: 0 0 0 5px; background: linear-gradient(#d2d2d2, #8f8f8f); border-bottom: 1px solid #666; }
.title { flex: 1; display: flex; justify-content: center; gap: 10px; line-height: 15px; color: #0a1226; white-space: nowrap; }
.title span { background: #5f7ba880; box-shadow: 0 0 6px 4px #5f7ba880; }
.info { display: flex; align-items: center; gap: 3px; width: 290px; padding-left: 5px; background: linear-gradient(#c9c9c9, #9a9a9a); }
.search { width: 120px; height: 14px; padding: 0 2px; background: #fff; border: 1px solid #666; font-style: italic; }
.search::placeholder { color: #444; opacity: 1; }
.sign { gap: 2px; }
.end { margin: 0 5px 0 auto; }
.vs { width: 1px; height: 10px; background: #777; }
.vs + button { margin: 0 2px 0 3px; }
.info > .dd:last-child { margin-right: 2px; }
.winbtns { display: flex; width: 71px; margin-left: 11px; height: 13px; }
.winbtns button { flex: 1; background: linear-gradient(#8195b4, #3b5480); border: 1px solid #b3bfd3; border-top: 0; }
.winbtns button + button { border-left: 0; }
.winbtns .x { flex: 2; background: linear-gradient(#b97b7d, #8f2226); }
.tabs { display: flex; align-items: center; gap: 1px; height: 14px; padding-left: 2px; }
.tabs button { height: 14px; padding: 0 6px; color: #1b1b1b; }
.tabs .on { margin-left: 2px; background: linear-gradient(#c2f2ae, #a4e58b); border-radius: 2px 2px 0 0; font-weight: 700; }
.tabtoggle { display: flex; align-items: center; gap: 4px; margin-left: 12px; }
.box { width: 10px; height: 5px; border: 1px solid #222; background: #eee; border-radius: 1px; }

.ribbon { display: flex; height: 63px; border-top: 1px solid #6d9b5b; border-bottom: 1px solid #7ab765; background: linear-gradient(#cfd6cc 0, #a3a3a3 20px, #727272 25px, #747474); padding-left: 1px; }
.panel { display: flex; flex-direction: column; background: #fbfcf9; border-right: 1px solid #b4b4b4; }
.pb { flex: 1; display: flex; justify-content: center; align-items: stretch; min-height: 0; padding-top: 2px; }
.pb.col { flex-direction: column; align-items: center; justify-content: flex-start; gap: 2px; }
.pt { flex: none; display: flex; align-items: center; justify-content: center; gap: 6px; height: 12px; background: #ececec; border-top: 1px solid #dadada; }
.p-select { width: 38px; } .p-props { width: 42px; } .p-clip { width: 54px; } .p-geom { width: 88px; }
.p-mod { width: 231px; } .p-view { width: 43px; } .p-meas { width: 37px; } .p-create { width: 59px; } .p-draw { width: 89px; border-left: 2px solid #888; }
.p-draw .pt { background: #aee894; border-color: #98cf80; }
.big { flex-direction: column; justify-content: flex-start; width: 29px; line-height: 11px; }
.big > svg { margin-bottom: 1px; }
.big .dd { margin-top: 1px; }
.off { color: #999; line-height: 10px; }
.mid { width: 26px; height: 22px; }
.sel { background: #b8dcf2; outline: 1px solid #5b9cc7; outline-offset: -1px; }
.m { width: 32px; gap: 3px; }
.p-meas .pb { padding-top: 4px; gap: 0; }
.stack { display: flex; flex-direction: column; gap: 4px; padding: 1px 2px; }
.two { padding: 10px 0 0; }
.two button, .split { gap: 3px; justify-content: flex-start; }
.two .dd, .split .dd { margin-left: 2px; }
.mini-grid { display: grid; grid-template-columns: 17px 20px; grid-auto-rows: 12px; gap: 4px 0; padding: 1px 0 0 5px; }
.mini-grid button, .pair-grid button { justify-content: flex-start; gap: 2px; }
.edit-grid { display: grid; grid-template-columns: repeat(3, 16px); grid-auto-rows: 12px; gap: 4px 0; padding: 2px 0 0 6px; }
.split { grid-column: 1 / 4; }
.pair-grid { display: grid; grid-template-columns: 22px 14px; grid-auto-rows: 12px; gap: 4px 0; padding-top: 2px; }
.gallery { display: flex; flex: 1; margin: 0 2px 2px 1px; border: 1px solid #c5c5c5; }
.shapes { flex: 1; display: grid; grid-template-columns: repeat(5, 1fr); grid-auto-rows: 16px; }
.gscroll { width: 9px; display: flex; flex-direction: column; align-items: center; justify-content: space-around; background: #f0f0f0; border-left: 1px solid #bbb; }
.more { border-top-color: #111; }

.options { display: flex; align-items: center; height: 20px; padding-left: 6px; background: #cbdac5; border-bottom: 1px solid #555; color: #1e261b; white-space: nowrap; }
.options strong { width: 71px; }
.sep { width: 1px; height: 14px; margin: 0 5px 0 13px; background: #8ea087; }
.options select, .filter select { height: 14px; padding: 0 2px; border: 1px solid #a9b5a4; color: #666; background: #e3e8e0 conic-gradient(from -45deg at 50% 100%, #555 90deg, transparent 0) no-repeat right 3px center / 5px 3px; }
.options input[type="text"] { height: 14px; padding: 0 3px; border: 1px solid #a1b199; }
.o-h { width: 39px; margin-right: 4px; } .o-c { width: 41px; margin-right: 4px; } .o-v { width: 80px; }
.options .o-v, .options .o-r { background: #c5d4bf; color: #555; }
.o-v + .sep { margin: 0 13px 0 7px; }
.o-l { width: 52px; } .o-loc { width: 69px; }
.o-loc + .sep { margin: 0 5px 0 8px; }
.ck { display: flex; align-items: center; gap: 2px; }
input[type="checkbox"] { appearance: none; display: grid; place-items: center; width: 9px; height: 9px; border: 1px solid #777; background: #f6f6f6; }
input[type="checkbox"]:checked::before { content: ""; width: 3px; height: 6px; border: solid #333; border-width: 0 1px 1px 0; transform: rotate(40deg); }
.o-off { margin: 0 3px 0 10px; }
.options .o-w { width: 80px; margin-right: 3px; padding: 0 2px; background: #fff; border-color: #fff; }
.o-r { width: 80px; margin-left: 6px; }

.work { flex: 1; display: flex; min-height: 0; background: #e9e9e9; }
.side { display: flex; flex-direction: column; width: 314px; border-left: 1px solid #777; }
.ph { display: flex; align-items: center; justify-content: space-between; height: 13px; line-height: 11px; padding: 0 2px 0 1px; background: linear-gradient(#cdcfcd, #bcbec0); color: #333; border-bottom: 1px solid #777; font-weight: 700; }
.props { display: flex; flex-direction: column; background: #efefef; }
.props .ph { font-weight: 400; }
.type { width: 100%; height: 49px; justify-content: flex-start; gap: 3px; text-align: left; line-height: 11px; color: #666; background: linear-gradient(#f8f8f8, #dfdfdf); border-right: 1px solid #ccc; padding: 0 2px; }
.type .dd { margin-left: auto; }
.thumb { width: 44px; height: 44px; display: flex; align-items: center; border: 1px solid #e0e0e0; background: #f6f6f6; }
.thumb i { width: 100%; height: 12px; border: 1px solid #777; border-top: 8px solid #747474; background: #fff; }
.filter { display: flex; gap: 4px; height: 15px; }
.filter select { width: 257px; height: 15px; background-color: #f7f7f7; border-color: #777; }
.filter button { gap: 3px; color: #777; }
.pg { display: flex; height: 186px; }
.pgrid { flex: 1; overflow: hidden; }
table { width: 100%; border-collapse: separate; border-spacing: 0; table-layout: fixed; }
.c1 { width: 150px; }
td, th { padding: 0; height: 12px; line-height: 11px; text-align: left; font-weight: 400; }
td { border-bottom: 1px dashed #b4b4b4; border-right: 1px dashed #b4b4b4; padding-left: 6px; }
td + td { padding-left: 2px; }
.ro td { color: #666; }
.g th { background: #c8c8c8; padding-left: 2px; color: #222; line-height: 12px; }
.g:first-child th { height: 13px; }
.chev { float: right; width: 6px; height: 8px; margin: 2px 3px 0 0; stroke: #222; }
td input[type="checkbox"] { margin: 1px; }
.vs-bar { width: 11px; display: flex; flex-direction: column; align-items: center; background: #f2f2f2; padding: 5px 0 2px; }
.vs-bar .dd { margin-top: auto; }
.thumbv { width: 9px; margin-top: 4px; border: 1px solid #777; border-radius: 1px; background: linear-gradient(90deg, #f5f5f5, #bbb 60%, #888); display: grid; place-items: center; }
.thumbv::before { content: ""; width: 5px; height: 5px; background: repeating-linear-gradient(#555 0 1px, transparent 1px 2px); }
.t1 { height: 107px; } .t2 { height: 222px; }
.pfoot { display: flex; justify-content: space-between; align-items: center; height: 20px; padding: 0 2px; }
.pfoot a { color: #1b6187; }
.pfoot button { width: 49px; height: 15px; border: 1px solid #888; border-radius: 2px; background: #f4f4f4; color: #444; }
.browser { display: flex; flex: 1; flex-direction: column; margin-top: 2px; }
.tree-wrap { flex: 1; display: flex; background: #fdfefb; border-top: 1px solid #999; }
.tree { flex: 1; min-width: 0; overflow: hidden; }
.tree, .tree ul { list-style: none; }
.tree ul { margin-left: 13px; }
.tree li { position: relative; }
.tree li::before { content: ""; position: absolute; left: 6px; top: 0; width: 1px; height: 100%; border-left: 1px dotted #aaa; }
.tree li:last-child::before { height: 6px; }
.n { position: relative; display: flex; align-items: center; height: 12px; padding-left: 18px; }
.n::before { content: ""; position: absolute; left: 7px; top: 6px; width: 10px; border-top: 1px dotted #aaa; }
.n:has(.ti) { padding-left: 14px; }
.n:has(.ti)::before { width: 6px; }
.ti { width: 11px; height: 11px; margin-right: 3px; }
.ex { position: absolute; left: 3px; top: 3px; width: 7px; height: 7px; border: 1px solid #999; background: linear-gradient(#444, #444) center / 3px 1px no-repeat #fff; }
.plus { background: linear-gradient(#444, #444) center / 3px 1px no-repeat, linear-gradient(#444, #444) center / 1px 3px no-repeat, #fff; }
.cur b { background: #dcdcdc; padding: 0 1px; margin-left: -1px; }

.view { flex: 1; display: flex; flex-direction: column; min-width: 0; margin-left: 4px; border-left: 1px solid #555; }
.canvas-row { flex: 1; display: flex; }
.canvas { position: relative; flex: 1; background: #fcfefa; }
.plan { width: 100%; height: 100%; }
.dim { font: 700 7px "Liberation Sans", sans-serif; fill: #1d3569; stroke: none; text-anchor: middle; }
.mdi { position: absolute; right: 2px; top: 5px; display: flex; gap: 3px; }
.navbar { position: absolute; right: 1px; top: 19px; width: 23px; height: 78px; display: flex; flex-direction: column; align-items: center; justify-content: space-between; border: 1px solid #888; border-radius: 4px; background: #f2f3f1; }
.navbar > svg { align-self: flex-end; }
.navbar .dd { border-width: 2px 2px 0; }
.hr { width: 17px; height: 1px; background: #999; }
.cv-scroll { width: 12px; display: flex; flex-direction: column; align-items: center; justify-content: space-between; padding: 5px 0; background: #eee; border-left: 1px solid #ddd; }
.cv-scroll span { width: 10px; height: 10px; border: 1px solid #777; background: linear-gradient(90deg, #eee, #aaa); }
.viewbar { display: flex; align-items: center; height: 13px; padding: 0 6px 0 16px; background: #ebebeb; }
.scale { width: 36px; }
.vicons { display: flex; gap: 2px; width: 128px; }
.hs { flex: 1; display: flex; justify-content: center; }
.hs span { width: 10px; height: 10px; border: 1px solid #888; background: linear-gradient(#eee 50%, #999); }

.status { display: flex; align-items: center; justify-content: space-between; height: 17px; background: linear-gradient(#9c9c9c 0, #d0d0d0 2px, #b8b8b8 60%, #888); color: #181818; }
.msg { white-space: pre; padding-left: 1px; }
.sicons { display: flex; gap: 2px; padding-right: 44px; }
.sicons button { width: 15px; height: 14px; background: #d2d2d2; border: 1px solid #b5b5b5; }
.sicons .flat { width: auto; margin-left: 2px; background: none; border: 0; }

.taskbar { display: flex; align-items: center; height: 26px; background: linear-gradient(#324f7a 0, #0b2857 2px, #0a2556); }
.start { width: 38px; height: 26px; padding-right: 2px; }
.apps { display: flex; justify-content: space-between; width: 372px; margin-left: 1px; }
.apps button { width: 40px; height: 26px; }
.apps .active { background: linear-gradient(135deg, #aab4c4, #6d7b93); border: 1px solid #c0c9d6; border-radius: 2px; }
.tray { display: flex; align-items: center; margin-left: auto; height: 26px; }
.tray button { width: 16px; }
.clock { width: 52px; text-align: center; color: #fff; line-height: 11px; }
.tray .peek { width: 9px; height: 26px; background: #234571; border-left: 1px solid #56749c; }
```
